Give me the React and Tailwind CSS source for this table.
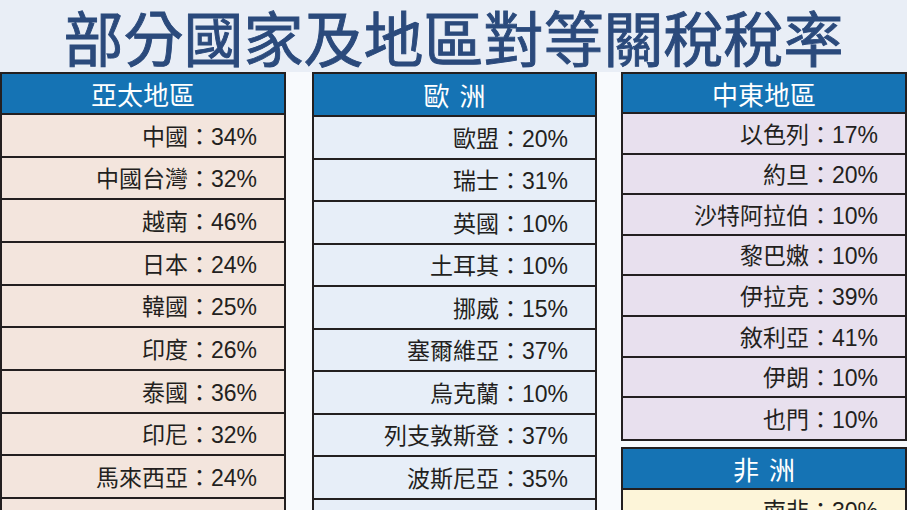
import React from "react";

const asia = [
  "中國：34%",
  "中國台灣：32%",
  "越南：46%",
  "日本：24%",
  "韓國：25%",
  "印度：26%",
  "泰國：36%",
  "印尼：32%",
  "馬來西亞：24%",
  "",
];

const europe = [
  "歐盟：20%",
  "瑞士：31%",
  "英國：10%",
  "土耳其：10%",
  "挪威：15%",
  "塞爾維亞：37%",
  "烏克蘭：10%",
  "列支敦斯登：37%",
  "波斯尼亞：35%",
  "",
];

const mideast = [
  "以色列：17%",
  "約旦：20%",
  "沙特阿拉伯：10%",
  "黎巴嫩：10%",
  "伊拉克：39%",
  "敘利亞：41%",
  "伊朗：10%",
  "也門：10%",
];

const font = "font-['Liberation_Sans','Noto_Sans_CJK_TC',sans-serif]";

function Row({ text, rowClass }) {
  return (
    <div
      className={`${rowClass} flex items-center justify-end pr-[27px] pt-[3px] text-[23px] text-[#231f20] ${font}`}
    >
      {text}
    </div>
  );
}

function Head({ h, children }) {
  return (
    <div
      className={`${h} bg-[#1573b4] border-b-2 border-[#231f20] flex items-center justify-center gap-[10px] text-white text-[26px]`}
    >
      {children}
    </div>
  );
}

export default function App() {
  return (
    <div className="w-[907px] h-[510px] overflow-hidden bg-[#f8fafd] font-['Noto_Sans_CJK_TC',sans-serif]">
      <div className="h-[72px] bg-[#e9eef6] flex items-center justify-center overflow-hidden">
        <h1 className="text-[60px] leading-[72px] font-normal text-[#2b4a7c] [-webkit-text-stroke:0.9px_#2b4a7c] font-['Noto_Sans_CJK_TC',sans-serif]">
          部分國家及地區對等關稅稅率
        </h1>
      </div>

      <div className="flex items-start">
        {/* 亞太地區 */}
        <div className="w-[286px] border-x-2 border-t-2 border-[#231f20]">
          <Head h="h-[41px]">亞太地區</Head>
          {asia.map((t, i) => (
            <Row
              key={i}
              text={t}
              rowClass="h-[42.67px] bg-[#f3e5dd] border-b-2 border-[#231f20]"
            />
          ))}
        </div>

        {/* 歐洲 */}
        <div className="ml-[26px] w-[285px] border-x-2 border-t-2 border-[#231f20]">
          <Head h="h-[43px]">
            <span>歐</span>
            <span>洲</span>
          </Head>
          {europe.map((t, i) => (
            <Row
              key={i}
              text={t}
              rowClass="h-[42.56px] bg-[#e7eef8] border-b-2 border-[#231f20]"
            />
          ))}
        </div>

        {/* 中東地區 + 非洲 */}
        <div className="ml-[24px] w-[286px] flex flex-col">
          <div className="border-2 border-[#231f20]">
            <Head h="h-[40px]">中東地區</Head>
            {mideast.map((t, i) => (
              <Row
                key={i}
                text={t}
                rowClass={`h-[40.6px] bg-[#e8e0ee] ${i < mideast.length - 1 ? "border-b-2 border-[#231f20]" : ""}`}
              />
            ))}
          </div>
          <div className="mt-[6px] border-x-2 border-t-2 border-[#231f20]">
            <Head h="h-[41px]">
              <span>非</span>
              <span>洲</span>
            </Head>
            <Row
              text="南非：30%"
              rowClass="h-[41px] bg-[#fdf5d9] border-b-2 border-[#231f20]"
            />
          </div>
        </div>
      </div>
    </div>
  );
}
